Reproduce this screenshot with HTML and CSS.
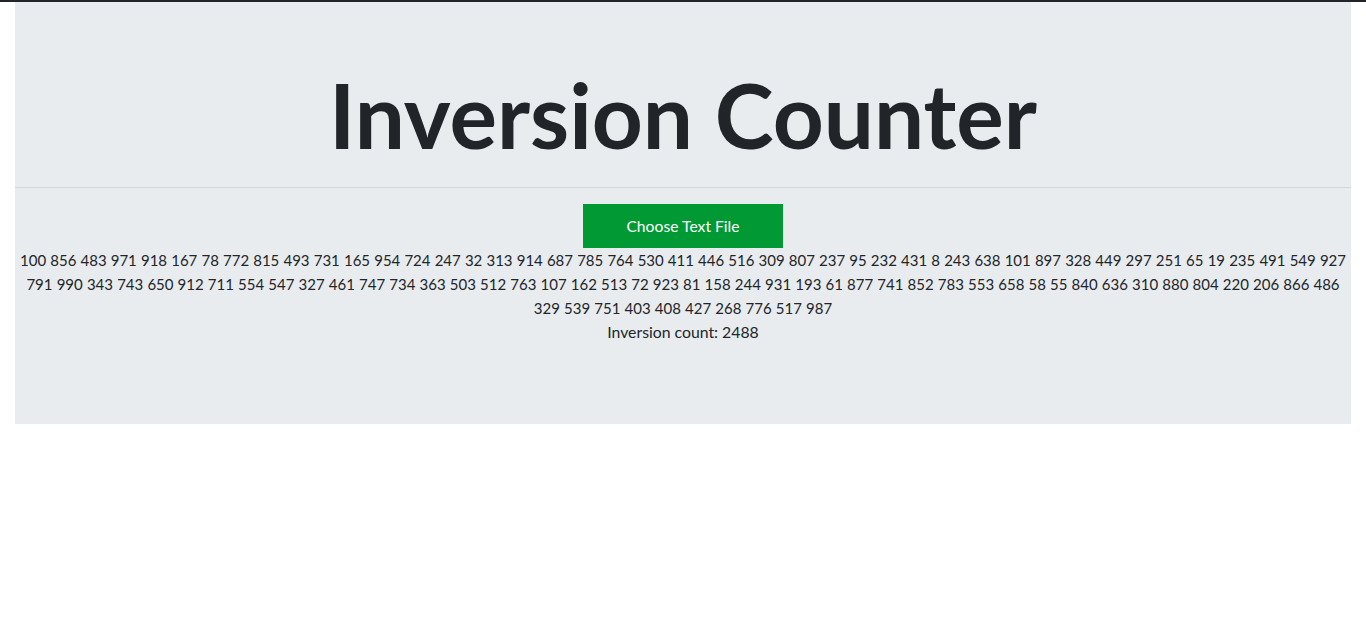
FILE: index.html
```html
<!DOCTYPE html>
<html>
<head>
<meta charset="utf-8">
<title>Inversion Counter</title>
<link rel="stylesheet" href="styles.css">
</head>
<body>
<div class="topline"></div>
<div class="container">
  <div class="jumbotron">
    <h1 class="title">Inversion Counter</h1>
    <hr class="divider">
    <button class="btn-file">Choose Text File</button>
    <p class="numbers">100 856 483 971 918 167 78 772 815 493 731 165 954 724 247 32 313 914 687 785 764 530 411 446 516 309 807 237 95 232 431 8 243 638 101 897 328 449 297 251 65 19 235 491 549 927 791 990 343 743 650 912 711 554 547 327 461 747 734 363 503 512 763 107 162 513 72 923 81 158 244 931 193 61 877 741 852 783 553 658 58 55 840 636 310 880 804 220 206 866 486 329 539 751 403 408 427 268 776 517 987</p>
    <p class="count">Inversion count: 2488</p>
  </div>
</div>
</body>
</html>
```

FILE: styles.css
```css
html, body {
  margin: 0;
  padding: 0;
  background: #ffffff;
}
body {
  font-family: Lato, "Open Sans", sans-serif;
  font-size: 15px;
  line-height: 24px;
  color: #212529;
}
.topline {
  height: 2px;
  background: #212529;
}
.container {
  padding: 0 15px;
}
.jumbotron {
  background: #e9ecef;
  height: 422px;
  text-align: center;
  padding-top: 60px;
  box-sizing: border-box;
}
.title {
  margin: 0;
  font-size: 89px;
  font-weight: 700;
  line-height: 106px;
}
.divider {
  margin: 19px 0 16px;
  border: 0;
  border-top: 1px solid #d3d6d9;
}
.btn-file {
  display: inline-block;
  width: 200px;
  height: 44px;
  border: 0;
  border-radius: 0;
  background: #009933;
  color: #ffffff;
  font-family: Lato, "Open Sans", sans-serif;
  font-size: 15.7px;
  padding: 0;
  margin: 0;
  vertical-align: top;
}
.numbers, .count {
  margin: 0;
}
.numbers {
  padding: 0 2px;
  word-spacing: 0.3px;
}
.count {
  font-size: 15.8px;
}
```
